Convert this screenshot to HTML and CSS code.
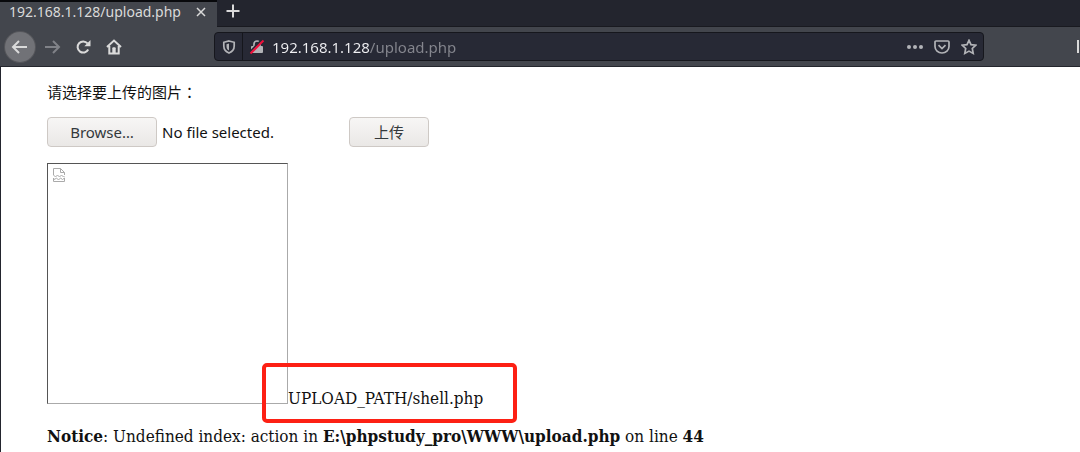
FILE: index.html
```html
<!DOCTYPE html>
<html lang="zh-CN">
<head>
<meta charset="utf-8">
<title>192.168.1.128/upload.php</title>
<link rel="stylesheet" href="styles.css">
</head>
<body>
<header class="browser">
  <div class="tabs">
    <div class="tab">
      <span class="tab-title">192.168.1.128/upload.php</span>
      <button class="tab-close" aria-label="Close tab"><svg width="10" height="10" viewBox="0 0 10 10"><path d="M1 1l8 8M9 1L1 9"/></svg></button>
    </div>
    <button class="tab-new" aria-label="New tab"><svg width="14" height="14" viewBox="0 0 14 14"><path d="M7 0.500v13M0.500 7h13"/></svg></button>
  </div>
  <nav class="toolbar">
    <button class="tool back" aria-label="Back"><svg width="18" height="16" viewBox="0 0 18 16"><path d="M16 8H2.500M8 2L2 8l6 6"/></svg></button>
    <button class="tool forward" aria-label="Forward" disabled><svg width="18" height="16" viewBox="0 0 18 16"><path d="M2 8h13.500M10 2l6 6-6 6"/></svg></button>
    <button class="tool" aria-label="Reload"><svg width="16" height="16" viewBox="0 0 16 16"><path d="M13.200 10.500A5.600 5.600 0 1 1 12.500 4.400"/><path class="solid" d="M15.500 1v6.200H9.300z"/></svg></button>
    <button class="tool" aria-label="Home"><svg width="16" height="16" viewBox="0 0 16 16"><path d="M1 8l7-6.500L15 8M3.300 7v7.500h9.400V7"/><path class="solid" d="M6.300 14V9.300q0-1 1-1h1.400q1 0 1 1V14z"/></svg></button>
    <div class="address">
      <button class="tool shield" aria-label="Tracking protection"><svg width="14" height="16" viewBox="0 0 14 16"><path d="M7 2l5.200 1.300V7c0 3.500-2 5.700-5.200 7C3.800 12.700 1.800 10.500 1.800 7V3.300z"/><path class="solid" d="M7 4.500v7C5 10.500 4.500 9 4.500 7V5.200z"/></svg></button>
      <button class="tool lock" aria-label="Connection is not secure"><svg width="16" height="16" viewBox="0 0 16 16"><path d="M5 8V5a3 3 0 0 1 6 0v3"/><path class="solid" d="M3 7h10q1 0 1 1v5q0 1-1 1H3q-1 0-1-1V8q0-1 1-1z"/><path class="gap" d="M0.500 13.500L13 0.500"/><path class="slash" d="M1.500 14.500L14.500 1.500"/></svg></button>
      <input class="url" type="text" aria-label="Address" value="192.168.1.128/upload.php">
      <button class="tool" aria-label="Page actions"><svg width="16" height="16" viewBox="0 0 16 16"><g class="solid"><circle cx="2" cy="8" r="2"/><circle cx="8" cy="8" r="2"/><circle cx="14" cy="8" r="2"/></g></svg></button>
      <button class="tool" aria-label="Save to Pocket"><svg width="16" height="16" viewBox="0 0 16 16"><path d="M2 2h12q1 0 1 1v4.500a7 6.500 0 0 1-14 0V3q0-1 1-1z"/><path d="M4.500 6.200L8 9.500l3.500-3.300"/></svg></button>
      <button class="tool" aria-label="Bookmark"><svg width="16" height="16" viewBox="0 0 16 16"><path class="star" d="M8 1.300l2 4.300 4.800.600-3.500 3.300.900 4.900L8 12.100l-4.200 2.300.900-4.900L1.200 6.200 6 5.600z"/></svg></button>
    </div>
    <span class="library"></span>
  </nav>
</header>
<main class="page">
  <form>
    <p class="prompt">请选择要上传的图片<span class="colon" lang="zh-TW">：</span></p>
    <div class="upload">
      <label class="file">
        <input class="file-input" type="file">
        <span class="button">Browse…</span>
        <span>No file selected.</span>
      </label>
      <button class="button submit" type="button">上传</button>
    </div>
  </form>
  <div class="result">
    <div class="missing" role="img" aria-label="Missing image"><svg width="12" height="14" viewBox="0 0 12 14"><path d="M0.500 7V0.500h7l4 4V7M7.500 0.500v4h4M0.500 7l2 2 2-2 2 2 2-2 2 2 1-1M0.500 10v3.500h11V10l-2 1.500-2-1.500-2 2-2-2-2 1.500z"/></svg></div>
    <span class="path">UPLOAD_PATH/shell.php</span>
  </div>
  <p class="notice"><b>Notice</b>: Undefined index: action in <b>E:\phpstudy_pro\WWW\upload.php</b> on line <b>44</b></p>
</main>
</body>
</html>
```
FILE: styles.css
```css
* { box-sizing: border-box; }
body {
  display: flex;
  flex-direction: column;
  min-height: 100vh;
  margin: 0;
  background: #fff;
  color: #111;
  font: 17px/20px "DejaVu Serif Condensed", "DejaVu Serif", "Noto Sans CJK SC", serif;
}
button { border: 0; padding: 0; background: none; }
svg { display: block; fill: none; stroke: currentColor; stroke-width: 2; }
.browser {
  background: #43464d;
  color: #dadada;
  border-bottom: 1px solid #24262d;
  font-family: "Noto Sans", "Noto Sans CJK SC", sans-serif;
}
.tabs { display: flex; height: 27px; background: #23252e; border-bottom: 1px solid #191a20; }
.tab {
  display: flex;
  align-items: center;
  gap: 12px;
  width: 217px;
  height: 27px;
  padding: 0 11px 5px 9px;
  background: #43464d;
  border-top: 2px solid #08090c;
  font-size: 14px;
  line-height: 20px;
}
.tab-title { flex: 1; white-space: nowrap; }
.tab-close, .tab-new { color: inherit; }
.tab-close svg { stroke-width: 1.500; }
.tab-new { padding: 0 9px 4px; }
.toolbar { display: flex; align-items: center; height: 39px; padding-left: 5px; }
.tool { display: grid; place-items: center; width: 31px; height: 30px; color: inherit; flex: none; }
.solid { fill: currentColor; stroke: none; }
.back { width: 30px; border-radius: 50%; background: #717277; box-shadow: 0 0 0 1px #55565b; }
.forward { margin-left: 1px; color: #808288; }
.address {
  display: flex;
  align-items: center;
  flex: 1;
  height: 29px;
  margin: 0 93px 0 85px;
  padding-right: 1px;
  border: 1px solid #16171d;
  border-radius: 4px;
  background: #272935;
  color: #b2b3b7;
}
.address .tool { width: 27px; height: 27px; }
.address .shield { width: 28px; border-right: 1px solid #15161c; }
.address svg { stroke-width: 1.700; }
.address .lock .gap { stroke: #272935; stroke-width: 2; }
.address .lock .slash { stroke: #f0103c; stroke-width: 2; }
.url {
  flex: 1;
  min-width: 0;
  padding: 0 0 0 2px;
  border: 0;
  outline: 0;
  background: linear-gradient(90deg, #f0f0f3 99px, #85868e 99px);
  background-clip: text;
  -webkit-background-clip: text;
  color: transparent;
  caret-color: #fff;
  font: 15px/22px "Noto Sans", sans-serif;
}
.library { width: 2px; height: 13px; margin-right: 1px; background: #dadada; }
.page { flex: 1; padding: 15px 47px 0 46px; border-left: 1px solid #23252e; }
.prompt { margin: 0 0 15px; font: 15px/20px "Noto Sans CJK SC", sans-serif; }
.colon { font-family: "Noto Sans CJK TC", sans-serif; }
.upload { display: flex; align-items: center; gap: 75px; font: 15px/22px "Noto Sans", "Noto Sans CJK SC", sans-serif; }
.file { position: relative; display: flex; align-items: center; gap: 5px; }
.file-input { position: absolute; inset: 0; width: 100%; opacity: 0; }
.button {
  display: grid;
  place-items: center;
  width: 110px;
  height: 30px;
  border: 1px solid #cec9c5;
  border-radius: 4px;
  background: linear-gradient(#f7f6f5, #eae8e6);
  color: #34393c;
  font: inherit;
}
.submit { width: 80px; }
.result { display: flex; align-items: flex-end; margin-top: 16px; }
.missing {
  width: 241px;
  height: 241px;
  padding: 4px 5px;
  border: 1px solid #aaa;
  border-top-color: #555;
  border-left-color: #555;
  color: #aaa;
}
.missing svg { stroke-width: 1; }
.path { position: relative; margin-bottom: -4px; }
.path::after {
  content: "";
  position: absolute;
  inset: -25px -34px -15px -26px;
  border: 4px solid #fd2014;
  border-radius: 5px;
}
.notice { margin: 22px 0 6px; }
```
